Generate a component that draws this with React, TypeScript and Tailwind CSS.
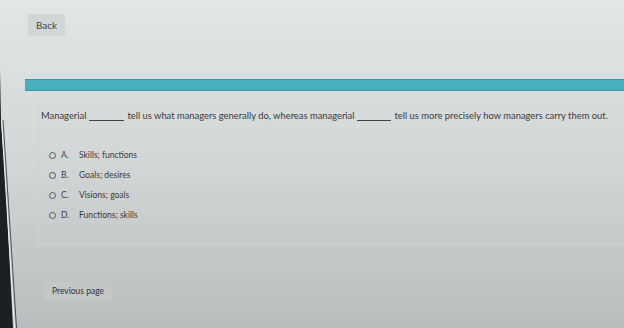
import React from "react";

const options = [
  { l: "A.", t: "Skills; functions" },
  { l: "B.", t: "Goals; desires" },
  { l: "C.", t: "Visions; goals" },
  { l: "D.", t: "Functions; skills" },
];

export default function App() {
  return (
    <div
      className="relative w-[624px] h-[328px] overflow-hidden bg-gradient-to-b from-[#e2e6e6] via-[#d2d6d7] to-[#b9bdbe] text-[#333]"
      style={{ fontFamily: "Lato, 'Open Sans', sans-serif" }}
    >
      <div className="pt-[14px] pl-[28px]">
        <div className="w-[37px] h-[22px] flex items-center justify-center bg-[#d2d6d7] text-[10px] text-[#444]">
          Back
        </div>
      </div>

      <div className="mt-[43px] ml-[25px] h-[12px] bg-[#4bb0be] border-y border-[#3c97a3]" />

      <div className="ml-[38px] mt-[9px] h-[145px] border-l border-b border-[#cfd3d4]">
        <div className="flex items-end pl-[2px] pt-[9px] text-[9.4px] text-[#3a3a3a] whitespace-nowrap">
          <span className="shrink-0">Managerial</span>
          <span className="shrink-0 inline-block w-[35px] border-b border-[#444] mx-[3px] mb-[2px]" />
          <span className="shrink-0">tell us what managers generally do, whereas managerial</span>
          <span className="shrink-0 inline-block w-[34px] border-b border-[#444] mx-[3px] mb-[2px]" />
          <span className="shrink-0">tell us more precisely how managers carry them out.</span>
        </div>
        <div className="mt-[14px] border-t border-[#d4d8d9] pt-[12px] flex flex-col gap-[10px]">
          {options.map((o) => (
            <div key={o.l} className="flex items-center h-[10px] pl-[10px] text-[8.5px] text-[#3a3a3a]">
              <span className="w-[7px] h-[7px] rounded-full border border-[#555]" />
              <span className="ml-[5px] w-[18px]">{o.l}</span>
              <span>{o.t}</span>
            </div>
          ))}
        </div>
      </div>
      <div className="ml-[20px] mt-[4px] border-t border-[#bfc3c4]" />

      <div className="mt-[32px] ml-[44px]">
        <div className="w-[68px] h-[18px] flex items-center justify-center bg-[#c3c7c8] text-[8.5px] text-[#333]">
          Previous page
        </div>
      </div>

      <svg className="absolute left-0 top-0" width="20" height="328" viewBox="0 0 20 328">
        <polygon points="0,70 1,120 6,190 13,328 0,328" fill="#1c1f24" />
        <line x1="1.5" y1="120" x2="14.5" y2="328" stroke="#f2f4f4" strokeWidth="1" />
        <line x1="3" y1="120" x2="16.5" y2="328" stroke="#2a2d31" strokeWidth="0.8" />
      </svg>
    </div>
  );
}
